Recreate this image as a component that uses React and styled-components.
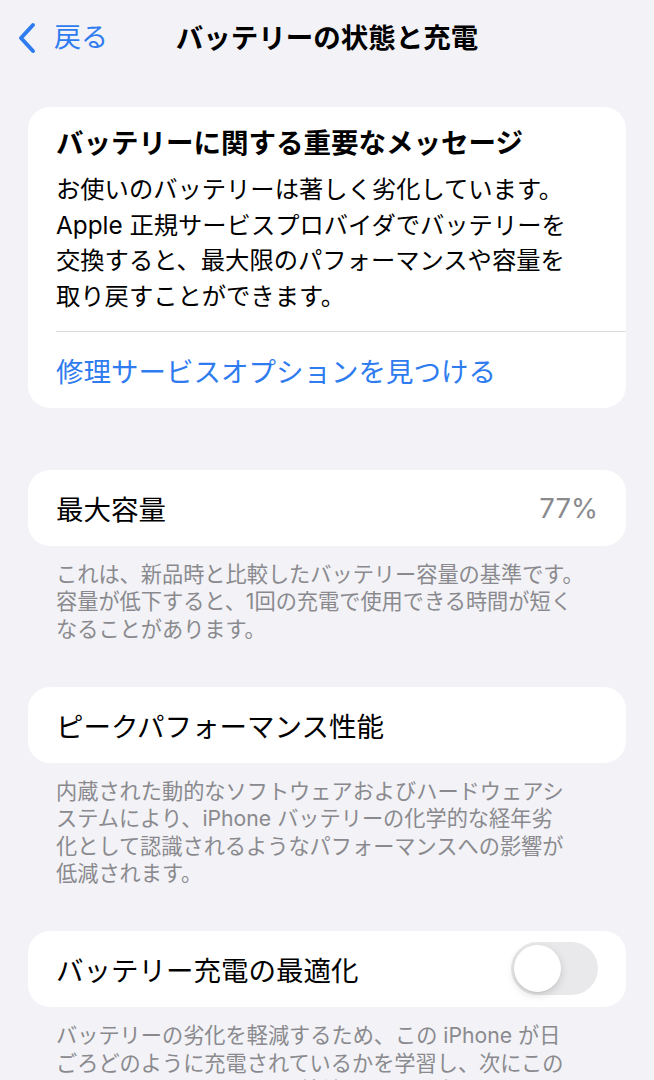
import React from 'react';
import styled, { createGlobalStyle } from 'styled-components';

const blue = '#2f7cf0';
const gray = '#8a8a8e';

const GlobalStyle = createGlobalStyle`
html, body {
  margin: 0;
  padding: 0;
  overflow: hidden;
  background-color: #f2f2f7;
}
body {
  font-family: "Inter", "Noto Sans CJK JP", sans-serif;
  -webkit-font-smoothing: antialiased;
}
`;

const Page = styled.div`
width: 654px;
min-height: 1080px;
background-color: #f2f2f7;
`;

const NavBar = styled.div`
height: 76px;
display: grid;
grid-template-columns: 1fr auto 1fr;
align-items: center;
padding: 0 16px;
box-sizing: border-box;
`;

const BackButton = styled.div`
display: flex;
align-items: center;
gap: 16px;
color: ${blue};
font-size: 27px;
line-height: 32px;
`;

const NavTitle = styled.div`
font-size: 27.5px;
font-weight: 700;
color: #000;
line-height: 32px;
`;

const Content = styled.div`
padding: 31px 28px 0;
`;

const Card = styled.div`
background-color: #fff;
border-radius: 22px;
overflow: hidden;
`;

const MessageCard = styled(Card)`
padding-left: 28px;
`;

const MessageTitle = styled.div`
padding-top: 18px;
font-size: 27.5px;
font-weight: 700;
line-height: 36px;
color: #000;
`;

const MessageBody = styled.div`
margin-top: 11px;
padding-bottom: 16px;
border-bottom: 1px solid #dcdce0;
font-size: 24.3px;
line-height: 35.7px;
color: #000;
white-space: nowrap;
`;

const LinkRow = styled.div`
height: 76px;
display: flex;
align-items: center;
font-size: 27.5px;
color: ${blue};
`;

const Row = styled(Card)`
height: 76px;
margin-top: ${({ $gap }) => $gap || 0}px;
display: flex;
align-items: center;
justify-content: space-between;
padding: 0 28px;
`;

const RowLabel = styled.div`
font-size: 27.5px;
color: #000;
`;

const RowValue = styled.div`
font-size: 27.5px;
color: ${gray};
`;

const Footer = styled.div`
padding: 15px 28px 43px;
font-size: 21.2px;
line-height: 27.6px;
color: ${gray};
white-space: nowrap;
`;

const Switch = styled.div`
width: 87px;
height: 53px;
border-radius: 27px;
background-color: ${({ $on }) => ($on ? '#34c759' : '#e9e9eb')};
position: relative;
flex-shrink: 0;
`;

const Knob = styled.div`
position: absolute;
top: 3px;
left: ${({ $on }) => ($on ? '37px' : '3px')};
width: 47px;
height: 47px;
border-radius: 50%;
background-color: #fff;
box-shadow: 0 3px 8px rgba(0, 0, 0, 0.15), 0 1px 1px rgba(0, 0, 0, 0.06);
`;

function Chevron() {
    return (
        <svg width="22" height="32" viewBox="0 0 22 32">
            <path d="M17 3 L5 16 L17 29" fill="none" stroke={blue} strokeWidth="4" strokeLinecap="round" strokeLinejoin="round" />
        </svg>
    );
}

function Lines({ lines }) {
    return lines.map((l, i) => (
        <React.Fragment key={i}>
            {l}
            {i < lines.length - 1 && <br />}
        </React.Fragment>
    ));
}

export default function App() {
    return (
        <Page>
            <GlobalStyle />
            <NavBar>
                <BackButton>
                    <Chevron />
                    <span>戻る</span>
                </BackButton>
                <NavTitle>バッテリーの状態と充電</NavTitle>
                <div />
            </NavBar>
            <Content>
                <MessageCard>
                    <MessageTitle>バッテリーに関する重要なメッセージ</MessageTitle>
                    <MessageBody>
                        <Lines lines={[
                            'お使いのバッテリーは著しく劣化しています。',
                            'Apple 正規サービスプロバイダでバッテリーを',
                            '交換すると、最大限のパフォーマンスや容量を',
                            '取り戻すことができます。',
                        ]} />
                    </MessageBody>
                    <LinkRow>修理サービスオプションを見つける</LinkRow>
                </MessageCard>

                <Row $gap={62}>
                    <RowLabel>最大容量</RowLabel>
                    <RowValue>77%</RowValue>
                </Row>
                <Footer>
                    <Lines lines={[
                        'これは、新品時と比較したバッテリー容量の基準です。',
                        '容量が低下すると、1回の充電で使用できる時間が短く',
                        'なることがあります。',
                    ]} />
                </Footer>

                <Row>
                    <RowLabel>ピークパフォーマンス性能</RowLabel>
                </Row>
                <Footer>
                    <Lines lines={[
                        '内蔵された動的なソフトウェアおよびハードウェアシ',
                        'ステムにより、iPhone バッテリーの化学的な経年劣',
                        '化として認識されるようなパフォーマンスへの影響が',
                        '低減されます。',
                    ]} />
                </Footer>

                <Row>
                    <RowLabel>バッテリー充電の最適化</RowLabel>
                    <Switch>
                        <Knob />
                    </Switch>
                </Row>
                <Footer>
                    <Lines lines={[
                        'バッテリーの劣化を軽減するため、この iPhone が日',
                        'ごろどのように充電されているかを学習し、次にこの',
                        'iPhone を長時間充電器に接続すると予測されるまで、',
                        '80%以上の充電を遅らせます。',
                    ]} />
                </Footer>
            </Content>
        </Page>
    );
}
